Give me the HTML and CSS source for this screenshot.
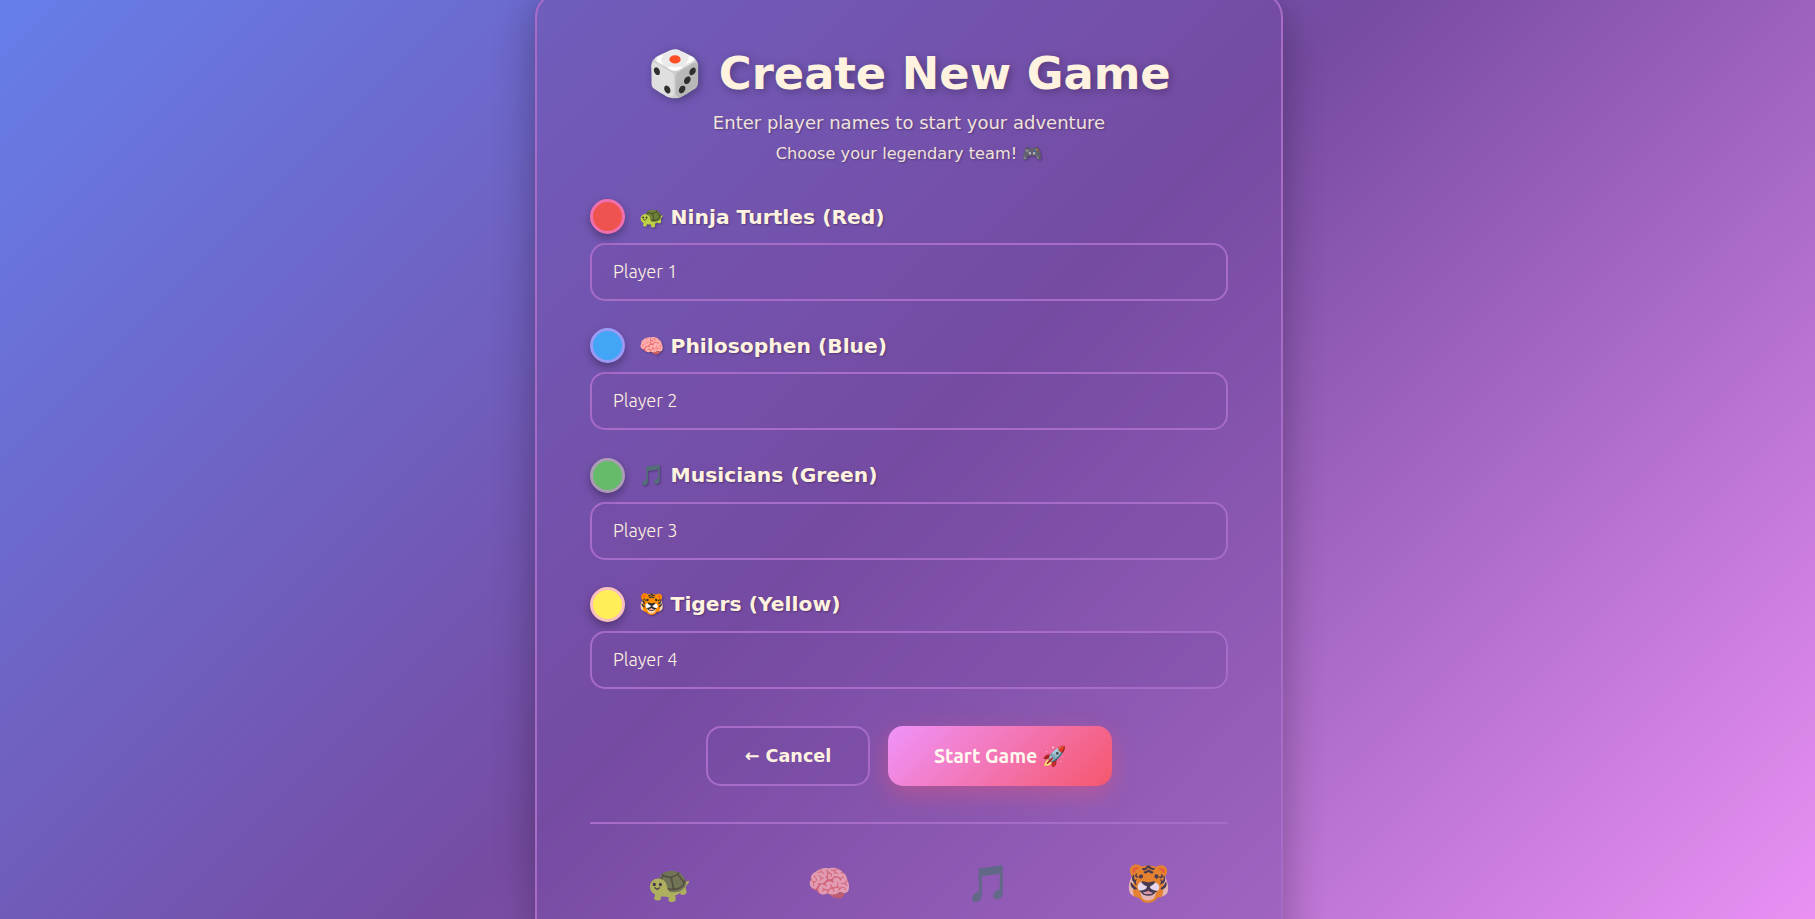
FILE: index.html
```html
<!DOCTYPE html>
<html lang="en">
<head>
    <meta charset="UTF-8">
    <title>Create New Game</title>
    <link rel="stylesheet" href="styles.css">
</head>
<body>
    <div class="card">
        <h1 class="title">🎲 Create New Game</h1>
        <p class="subtitle">Enter player names to start your adventure</p>
        <p class="tagline">Choose your legendary team! 🎮</p>

        <form class="player-form">
            <div class="player">
                <label class="player-label" for="player1"><span class="dot dot-red"></span>🐢 Ninja Turtles (Red)</label>
                <input class="player-input" type="text" id="player1" placeholder="Player 1">
            </div>
            <div class="player">
                <label class="player-label" for="player2"><span class="dot dot-blue"></span>🧠 Philosophen (Blue)</label>
                <input class="player-input" type="text" id="player2" placeholder="Player 2">
            </div>
            <div class="player">
                <label class="player-label" for="player3"><span class="dot dot-green"></span>🎵 Musicians (Green)</label>
                <input class="player-input" type="text" id="player3" placeholder="Player 3">
            </div>
            <div class="player">
                <label class="player-label" for="player4"><span class="dot dot-yellow"></span>🐯 Tigers (Yellow)</label>
                <input class="player-input" type="text" id="player4" placeholder="Player 4">
            </div>

            <div class="actions">
                <button class="btn btn-cancel" type="button">← Cancel</button>
                <button class="btn btn-start" type="submit">Start Game 🚀</button>
            </div>
        </form>

        <div class="teams">
            <span class="team-icon">🐢</span>
            <span class="team-icon">🧠</span>
            <span class="team-icon">🎵</span>
            <span class="team-icon">🐯</span>
        </div>
    </div>
</body>
</html>
```

FILE: styles.css
```css
* {
    box-sizing: border-box;
}
html, body {
    height: 919px;
    margin: 0;
    overflow: hidden;
}
body {
    font-family: "DejaVu Sans", sans-serif;
    background: linear-gradient(135deg, #667eea 0%, #764ba2 50%, #ea90f5 100%);
    color: #fff3e0;
    padding-left: 3px;
}
.card {
    width: 748px;
    height: 1100px;
    margin: -8px auto 0;
    padding: 51px 53px 0;
    border: 2px solid #a76bc8;
    border-radius: 25px;
    background: rgba(118, 75, 162, 0.4);
    box-shadow: 0 10px 40px rgba(0, 0, 0, 0.3);
}
.title {
    margin: 0 0 9px;
    font-size: 44.8px;
    line-height: 58px;
    font-weight: bold;
    text-align: center;
    text-shadow: 2px 2px 8px rgba(0, 0, 0, 0.3);
}
.subtitle {
    margin: 0 0 9px;
    font-size: 18px;
    line-height: 22px;
    text-align: center;
    opacity: 0.9;
    text-shadow: 1px 1px 2px rgba(0, 0, 0, 0.3);
}
.tagline {
    margin: 0 0 34px;
    font-size: 16.2px;
    line-height: 22px;
    text-align: center;
    opacity: 0.9;
    text-shadow: 1px 1px 2px rgba(0, 0, 0, 0.3);
}
.player {
    margin-bottom: 27.25px;
}
.player-label {
    display: flex;
    align-items: center;
    height: 35px;
    margin-bottom: 9px;
    font-size: 20.3px;
    font-weight: bold;
    text-shadow: 1px 1px 2px rgba(0, 0, 0, 0.3);
}
.dot {
    width: 35px;
    height: 35px;
    margin-right: 13.5px;
    border: 3px solid;
    border-radius: 50%;
    box-shadow: 0 4px 8px rgba(0, 0, 0, 0.3);
}
.dot-red { background-color: #ef5350; border-color: #f06fae; }
.dot-blue { background-color: #42a5f5; border-color: #9a9af5; }
.dot-green { background-color: #66bb6a; border-color: #ab9db5; }
.dot-yellow { background-color: #ffee58; border-color: #f8c0c0; }
.player-input {
    display: block;
    width: 100%;
    height: 58px;
    padding: 0 21px 2px;
    border: 2px solid #a76bc8;
    border-radius: 15px;
    background: rgba(118, 75, 162, 0.3);
    color: #fff3e0;
    font-family: Ubuntu, Lato, sans-serif;
    font-weight: 300;
    font-size: 18.3px;
}
.player-input::placeholder {
    color: #fff3e0;
    opacity: 1;
}
.actions {
    display: flex;
    justify-content: center;
    gap: 18px;
    margin-top: 37.5px;
}
.btn {
    height: 60px;
    border-radius: 15px;
    font-size: 17.6px;
    cursor: pointer;
}
.btn-cancel {
    width: 164px;
    border: 2px solid #a76bc8;
    background: rgba(118, 75, 162, 0.4);
    color: #fff3e0;
    font-family: "DejaVu Sans", sans-serif;
    font-weight: bold;
}
.btn-start {
    width: 224px;
    border: none;
    background: linear-gradient(135deg, #f093fb 0%, #f5576c 100%);
    color: #fff8ee;
    font-family: Ubuntu, "Noto Sans", sans-serif;
    font-weight: 600;
    font-size: 19.6px;
    box-shadow: 0 8px 25px rgba(245, 87, 108, 0.4);
}
.teams {
    display: grid;
    grid-template-columns: repeat(4, 1fr);
    margin-top: 36px;
    padding-top: 36px;
    border-top: 2px solid #a76bc8;
    text-align: center;
}
.team-icon {
    font-size: 36px;
    line-height: 48px;
    opacity: 0.75;
}
```
